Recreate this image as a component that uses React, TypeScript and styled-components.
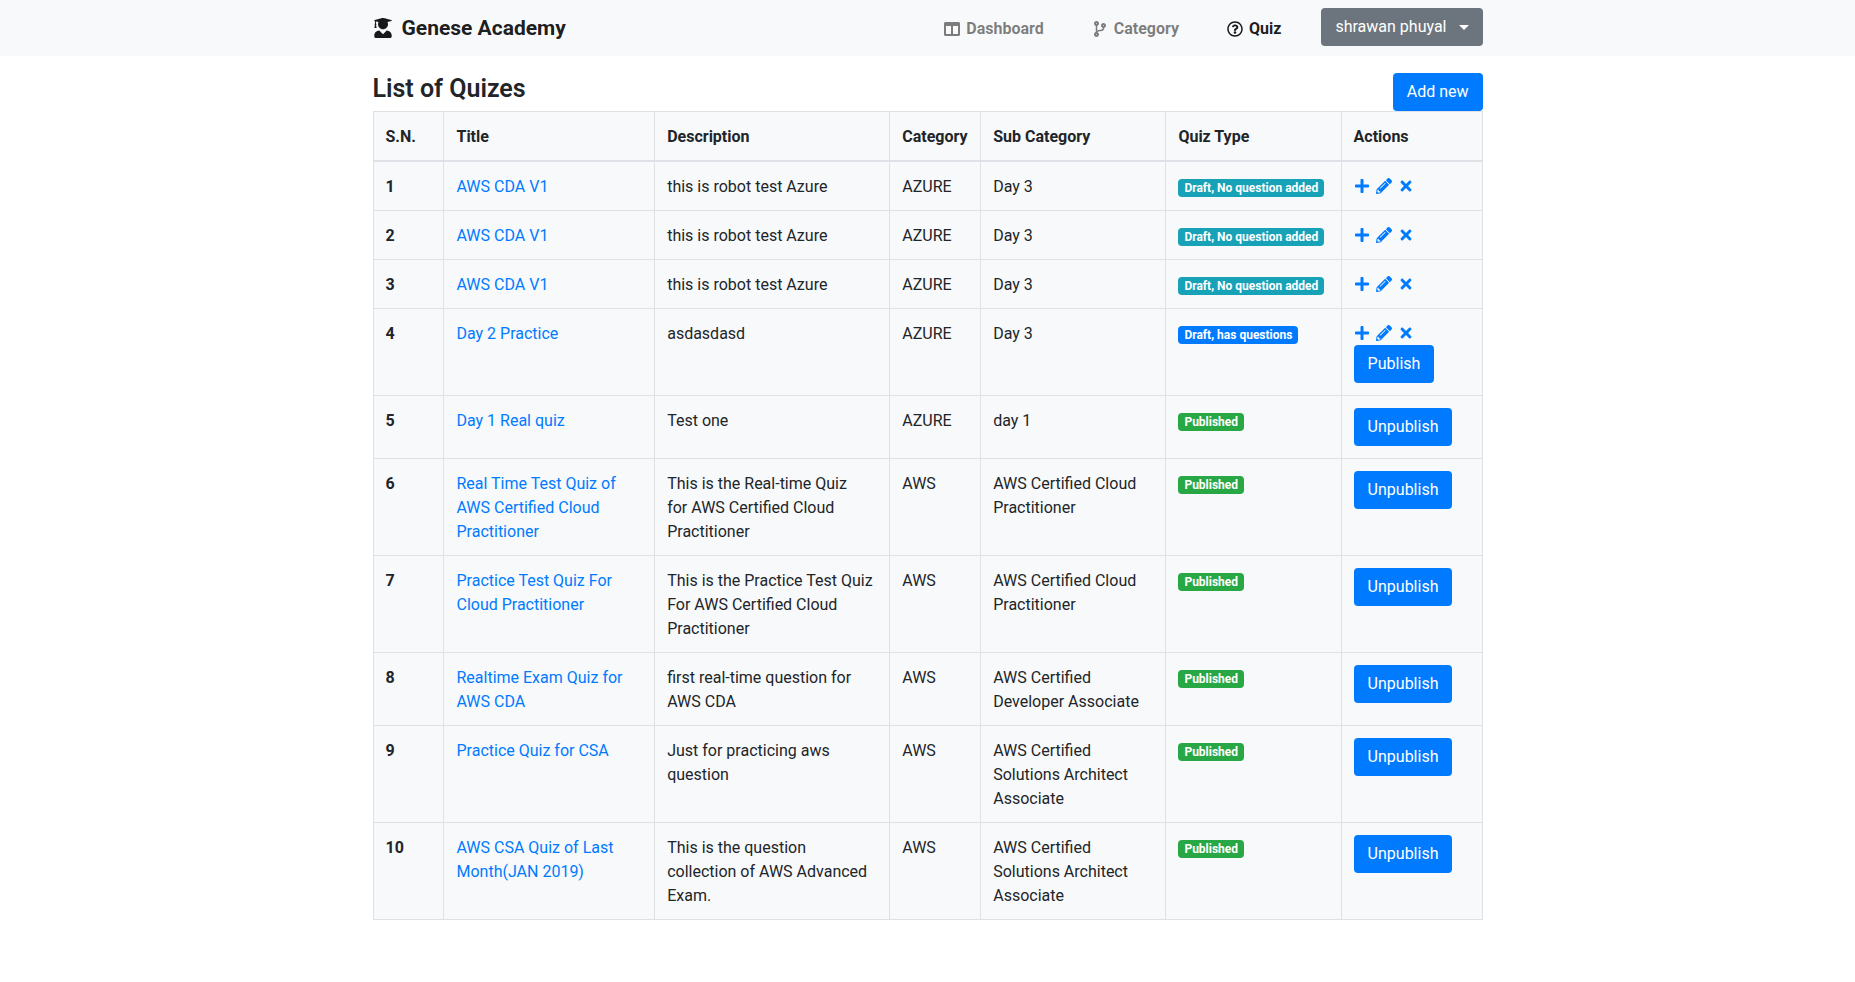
import React from 'react';
import styled, { createGlobalStyle } from 'styled-components';
import {
  FaCodeBranch,
  FaColumns,
  FaPencilAlt,
  FaPlus,
  FaRegQuestionCircle,
  FaTimes,
  FaUserGraduate,
} from 'react-icons/fa';

const GlobalStyle = createGlobalStyle`
  *, *::before, *::after { box-sizing: border-box; }
  body {
    margin: 0;
    background: #fff;
    color: #212529;
    font-family: Roboto, "Liberation Sans", sans-serif;
    font-size: 16px;
    line-height: 24px;
  }
`;

const Container = styled.div`
  width: 100%;
  max-width: 1140px;
  margin: 0 auto;
  padding: 0 15px;
`;

const Navbar = styled.header`
  background: #f8f9fa;
`;

const NavInner = styled(Container)`
  display: flex;
  align-items: center;
  justify-content: space-between;
  padding-top: 8px;
  padding-bottom: 10px;
`;

const Brand = styled.a`
  display: flex;
  align-items: center;
  gap: 9px;
  padding-top: 2px;
  color: rgba(0, 0, 0, 0.9);
  font-size: 21px;
  font-weight: 700;
  line-height: 30px;
  text-decoration: none;
`;

const NavMenu = styled.nav`
  display: flex;
  align-items: center;
  gap: 40px;
`;

const NavLinks = styled.ul`
  display: flex;
  gap: 48px;
  margin: 0;
  padding: 4px 0 0;
  list-style: none;
`;

const NavLink = styled.a<{ $active?: boolean }>`
  display: flex;
  align-items: center;
  gap: 6px;
  color: ${(p) => (p.$active ? 'rgba(0, 0, 0, 0.9)' : 'rgba(0, 0, 0, 0.5)')};
  font-weight: 700;
  text-decoration: none;
`;

const Button = styled.button<{ $tone?: 'primary' | 'secondary' }>`
  display: inline-flex;
  align-items: center;
  justify-content: center;
  gap: 12px;
  padding: 7px 14px;
  border: 0;
  border-radius: 4px;
  background: ${(p) => (p.$tone === 'secondary' ? '#6c757d' : '#007bff')};
  color: #fff;
  font: inherit;
  cursor: pointer;
`;

const Caret = styled.span`
  border-top: 5px solid;
  border-right: 5px solid transparent;
  border-left: 5px solid transparent;
`;

const PageHead = styled.div`
  display: flex;
  align-items: flex-start;
  justify-content: space-between;
  padding-top: 17px;
`;

const Title = styled.h1`
  margin: 0;
  font-size: 25px;
  font-weight: 600;
  line-height: 32px;
`;

const Table = styled.table`
  width: 100%;
  border: 1px solid #dee2e6;
  border-collapse: collapse;
  table-layout: fixed;
  background: #f8f9fa;
`;

const Col = styled.col<{ $share: number }>`
  width: ${(p) => p.$share}%;
`;

const Cell = styled.td`
  padding: 13px 12px 11px;
  border: 1px solid #dee2e6;
  text-align: left;
  vertical-align: top;
`;

const ActionCell = styled(Cell)`
  padding: 12px;
`;

const HeadCell = styled(Cell).attrs({ as: 'th', scope: 'col' })`
  border-bottom-width: 2px;
  font-weight: 700;
`;

const RowHead = styled(Cell).attrs({ as: 'th', scope: 'row' })`
  font-weight: 700;
`;

const TextLink = styled.a`
  color: #007bff;
  text-decoration: none;
`;

const badgeColors = { info: '#17a2b8', primary: '#007bff', success: '#28a745' };

const Badge = styled.span<{ $tone: keyof typeof badgeColors }>`
  display: inline-block;
  padding: 3px 6px;
  border-radius: 4px;
  background: ${(p) => badgeColors[p.$tone]};
  color: #fff;
  font-size: 12px;
  font-weight: 700;
  line-height: 12px;
  white-space: nowrap;
`;

const Tools = styled.div`
  display: flex;
  align-items: center;
  gap: 6px;
  height: 24px;
`;

const IconButton = styled.button`
  display: flex;
  padding: 0;
  border: 0;
  background: none;
  color: #007bff;
  font-size: 16px;
  cursor: pointer;
`;

type Status = 'empty' | 'draft' | 'published';

const statuses: Record<Status, { label: string; tone: keyof typeof badgeColors }> = {
  empty: { label: 'Draft, No question added', tone: 'info' },
  draft: { label: 'Draft, has questions', tone: 'primary' },
  published: { label: 'Published', tone: 'success' },
};

interface Quiz {
  title: string;
  description: string;
  category: string;
  sub: string;
  status: Status;
}

const quizzes: Quiz[] = [
  { title: 'AWS CDA V1', description: 'this is robot test Azure', category: 'AZURE', sub: 'Day 3', status: 'empty' },
  { title: 'AWS CDA V1', description: 'this is robot test Azure', category: 'AZURE', sub: 'Day 3', status: 'empty' },
  { title: 'AWS CDA V1', description: 'this is robot test Azure', category: 'AZURE', sub: 'Day 3', status: 'empty' },
  { title: 'Day 2 Practice', description: 'asdasdasd', category: 'AZURE', sub: 'Day 3', status: 'draft' },
  { title: 'Day 1 Real quiz', description: 'Test one', category: 'AZURE', sub: 'day 1', status: 'published' },
  {
    title: 'Real Time Test Quiz of AWS Certified Cloud Practitioner',
    description: 'This is the Real-time Quiz for\u00a0AWS Certified Cloud Practitioner',
    category: 'AWS',
    sub: 'AWS Certified Cloud Practitioner',
    status: 'published',
  },
  {
    title: 'Practice Test Quiz For Cloud Practitioner',
    description: 'This is the Practice Test Quiz For AWS Certified Cloud Practitioner',
    category: 'AWS',
    sub: 'AWS Certified Cloud Practitioner',
    status: 'published',
  },
  {
    title: 'Realtime Exam Quiz for AWS CDA',
    description: 'first real-time question for AWS CDA',
    category: 'AWS',
    sub: 'AWS Certified Developer Associate',
    status: 'published',
  },
  {
    title: 'Practice Quiz for CSA',
    description: 'Just for practicing aws question',
    category: 'AWS',
    sub: 'AWS Certified Solutions Architect Associate',
    status: 'published',
  },
  {
    title: 'AWS CSA Quiz of Last Month(JAN 2019)',
    description: 'This is the question collection of AWS Advanced Exam.',
    category: 'AWS',
    sub: 'AWS Certified Solutions Architect Associate',
    status: 'published',
  },
];

const columns = [
  { name: 'S.N.', share: 6.4 },
  { name: 'Title', share: 19 },
  { name: 'Description', share: 21.2 },
  { name: 'Category', share: 8.2 },
  { name: 'Sub Category', share: 16.7 },
  { name: 'Quiz Type', share: 15.8 },
  { name: 'Actions', share: 12.7 },
];

function Actions({ status }: { status: Status }) {
  if (status === 'published') return <Button type="button">Unpublish</Button>;
  return (
    <>
      <Tools>
        <IconButton type="button" aria-label="Add question"><FaPlus /></IconButton>
        <IconButton type="button" aria-label="Edit quiz"><FaPencilAlt /></IconButton>
        <IconButton type="button" aria-label="Delete quiz"><FaTimes /></IconButton>
      </Tools>
      {status === 'draft' && <Button type="button">Publish</Button>}
    </>
  );
}

export default function App() {
  return (
    <>
      <GlobalStyle />
      <Navbar>
        <NavInner>
          <Brand href="#"><FaUserGraduate size={20} />Genese Academy</Brand>
          <NavMenu>
            <NavLinks>
              <li><NavLink href="#dashboard"><FaColumns />Dashboard</NavLink></li>
              <li><NavLink href="#category"><FaCodeBranch />Category</NavLink></li>
              <li><NavLink href="#quiz" $active><FaRegQuestionCircle />Quiz</NavLink></li>
            </NavLinks>
            <Button type="button" $tone="secondary">shrawan phuyal<Caret /></Button>
          </NavMenu>
        </NavInner>
      </Navbar>
      <Container as="main">
        <PageHead>
          <Title>List of Quizes</Title>
          <Button type="button">Add new</Button>
        </PageHead>
        <Table>
          <colgroup>
            {columns.map((c) => <Col key={c.name} $share={c.share} />)}
          </colgroup>
          <thead>
            <tr>{columns.map((c) => <HeadCell key={c.name}>{c.name}</HeadCell>)}</tr>
          </thead>
          <tbody>
            {quizzes.map((q, i) => (
              <tr key={i}>
                <RowHead>{i + 1}</RowHead>
                <Cell><TextLink href="#quiz">{q.title}</TextLink></Cell>
                <Cell>{q.description}</Cell>
                <Cell>{q.category}</Cell>
                <Cell>{q.sub}</Cell>
                <Cell><Badge $tone={statuses[q.status].tone}>{statuses[q.status].label}</Badge></Cell>
                <ActionCell><Actions status={q.status} /></ActionCell>
              </tr>
            ))}
          </tbody>
        </Table>
      </Container>
    </>
  );
}
